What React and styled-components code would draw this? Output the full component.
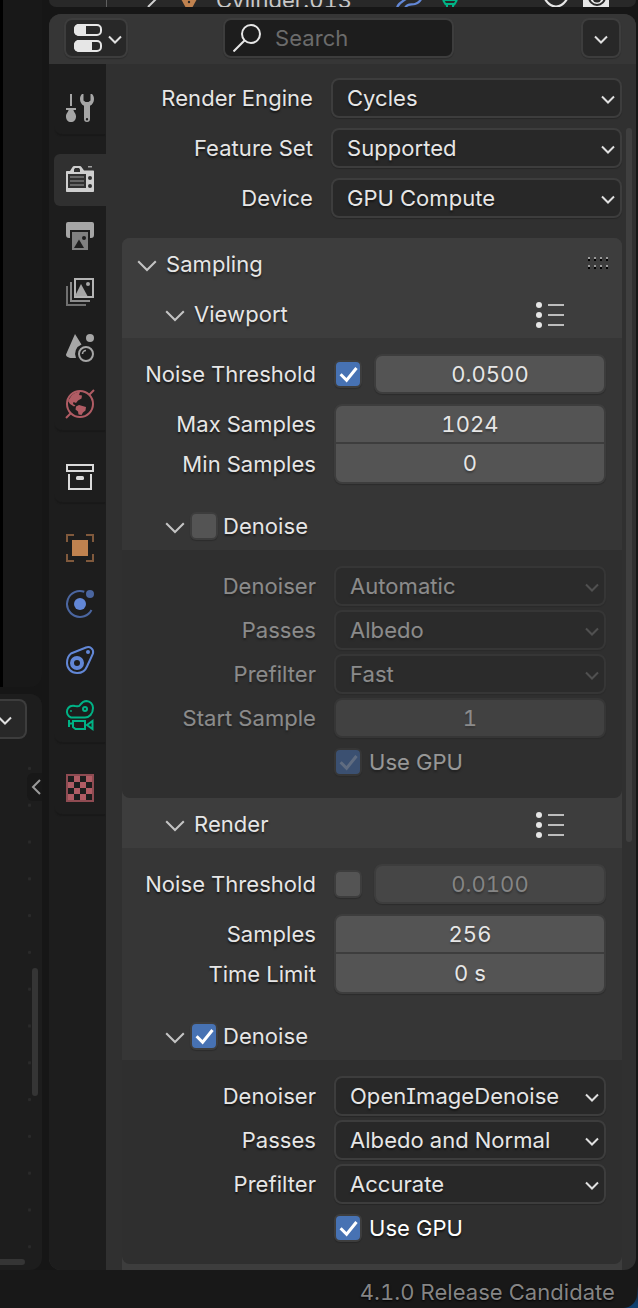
import React from "react";
import styled, { createGlobalStyle, css } from "styled-components";

export default function App() {
  return (
    <>
      <GlobalStyle />
      <Screen>
        <Workspace>
          <LeftColumn>
            <Viewport />
            <NodeEditor />
          </LeftColumn>
          <RightColumn>
            <Outliner />
            <Properties />
          </RightColumn>
        </Workspace>
        <Desktop>
          <StatusBar>4.1.0 Release Candidate</StatusBar>
        </Desktop>
      </Screen>
    </>
  );
}

function NodeEditor() {
  return (
    <NodeEditorStyled>
      <NodeHeader>
        <HeaderStub>
          <Chevron />
        </HeaderStub>
      </NodeHeader>
      <SidebarToggle>
        <svg width="10" height="16" viewBox="0 0 10 16">
          <path d="M9 1 2 8l7 7" fill="none" stroke="#9a9a9a" strokeWidth="2" />
        </svg>
      </SidebarToggle>
      <NodeScrollY />
      <NodeScrollX />
    </NodeEditorStyled>
  );
}

function Outliner() {
  return (
    <OutlinerStyled>
      <OutlinerRow>
        <TreeLine />
        <svg width="10" height="16" viewBox="0 0 10 16">
          <path d="M1 1l7 7-7 7" fill="none" stroke="#d0d0d0" strokeWidth="2" />
        </svg>
        <svg width="18" height="16" viewBox="0 0 18 16">
          <path d="M1 7 6 16h6l5-9z" fill="#c0824f" />
          <circle cx="9" cy="10" r="1.2" fill="#282828" />
        </svg>
        <span>Cylinder.013</span>
        <svg width="28" height="18" viewBox="0 0 28 18">
          <path
            d="M1 17c1-5 5-6 9-9M9 17c2-5 6-3 10-4 4-1 6-4 7-7"
            fill="none"
            stroke="#6287d6"
            strokeWidth="2.2"
          />
        </svg>
        <svg width="16" height="18" viewBox="0 0 16 18">
          <path
            d="M1 9h14M4 14 1 9M12 14l3-5M5 13h6v4H5z"
            fill="none"
            stroke="#00b386"
            strokeWidth="2"
          />
        </svg>
        <RowToggles>
          <svg width="26" height="16" viewBox="0 0 26 16">
            <path
              d="M2 7c6 10 16 10 22 0"
              fill="none"
              stroke="#e6e6e6"
              strokeWidth="2.2"
            />
          </svg>
          <svg width="26" height="16" viewBox="0 0 26 16">
            <path d="M0 0h26v16H0z" fill="#e6e6e6" />
            <circle
              cx="14"
              cy="5"
              r="8"
              fill="none"
              stroke="#282828"
              strokeWidth="2"
            />
            <circle cx="14" cy="6" r="4.5" fill="#282828" />
          </svg>
        </RowToggles>
      </OutlinerRow>
    </OutlinerStyled>
  );
}

function Properties() {
  return (
    <PropertiesStyled>
      <Header>
        <EditorButton>
          <svg width="28" height="28" viewBox="0 0 28 28">
            <rect x="1" y="1" width="26" height="10" rx="4" fill="none" stroke="#e6e6e6" strokeWidth="2" />
            <path d="M12 0H5a5 5 0 0 0-5 5v2a5 5 0 0 0 5 5h7z" fill="#e6e6e6" />
            <rect x="1" y="17" width="26" height="10" rx="4" fill="none" stroke="#e6e6e6" strokeWidth="2" />
            <path d="M18 16H5a5 5 0 0 0-5 5v2a5 5 0 0 0 5 5h13z" fill="#e6e6e6" />
          </svg>
          <Chevron />
        </EditorButton>
        <Search>
          <svg width="28" height="28" viewBox="0 0 28 28">
            <circle cx="18" cy="10" r="9" fill="none" stroke="#e6e6e6" strokeWidth="2" />
            <path d="M11.5 16.5.5 27.5" stroke="#e6e6e6" strokeWidth="2" />
          </svg>
          <span>Search</span>
        </Search>
        <OptionsButton>
          <Chevron />
        </OptionsButton>
      </Header>
      <Body>
        <Tabs>
          {tabGroups.map((group, i) => (
            <TabGroup key={i}>
              {group.map((tab) => (
                <Tab key={tab.name} $active={tab.active} title={tab.name}>
                  <svg width="32" height="32" viewBox="-2 -2 32 32">
                    {tab.icon}
                  </svg>
                </Tab>
              ))}
            </TabGroup>
          ))}
        </Tabs>
        <Content>
          <EngineRows>
            <SelectRow label="Render Engine" value="Cycles" wide />
            <SelectRow label="Feature Set" value="Supported" wide />
            <SelectRow label="Device" value="GPU Compute" wide />
          </EngineRows>
          <Panel>
            <PanelHeader>
              <Disclosure />
              <span>Sampling</span>
              <Grip>
                {Array.from({ length: 8 }, (_, i) => (
                  <i key={i} />
                ))}
              </Grip>
            </PanelHeader>
            <Section
              title="Viewport"
              threshold="0.0500"
              adaptive
              pairs={[
                ["Max Samples", "1024"],
                ["Min Samples", "0"],
              ]}
            >
              <SelectRow label="Denoiser" value="Automatic" />
              <SelectRow label="Passes" value="Albedo" />
              <SelectRow label="Prefilter" value="Fast" />
              <Row>
                <Label>Start Sample</Label>
                <NumberField>1</NumberField>
              </Row>
            </Section>
            <Section
              title="Render"
              threshold="0.0100"
              denoise
              pairs={[
                ["Samples", "256"],
                ["Time Limit", "0 s"],
              ]}
            >
              <SelectRow label="Denoiser" value="OpenImageDenoise" />
              <SelectRow label="Passes" value="Albedo and Normal" />
              <SelectRow label="Prefilter" value="Accurate" />
            </Section>
          </Panel>
        </Content>
        <ScrollThumb />
      </Body>
    </PropertiesStyled>
  );
}

function Section({ title, threshold, adaptive, denoise, pairs, children }) {
  return (
    <>
      <PanelHeader $sub>
        <Disclosure />
        <span>{title}</span>
        <PresetIcon />
      </PanelHeader>
      <SectionBody>
        <Row>
          <Label>Noise Threshold</Label>
          <Check checked={adaptive} />
          <NumberField $dim={!adaptive} $after>
            {threshold}
          </NumberField>
        </Row>
        <PairRow>
          <div>
            {pairs.map(([label]) => (
              <Label key={label}>{label}</Label>
            ))}
          </div>
          <Pair>
            {pairs.map(([label, value]) => (
              <span key={label}>{value}</span>
            ))}
          </Pair>
        </PairRow>
      </SectionBody>
      <PanelHeader $sub $plain>
        <Disclosure />
        <Check checked={denoise} />
        <span>Denoise</span>
      </PanelHeader>
      <SubPanel>
        <SubPanelBody $disabled={!denoise}>
          {children}
          <Row>
            <Label />
            <Check checked />
            <CheckLabel>Use GPU</CheckLabel>
          </Row>
        </SubPanelBody>
      </SubPanel>
    </>
  );
}

function SelectRow({ label, value, wide }) {
  return (
    <Row>
      <Label $wide={wide}>{label}</Label>
      <Select $wide={wide}>
        <span>{value}</span>
        <Chevron />
      </Select>
    </Row>
  );
}

function Check({ checked }) {
  return (
    <CheckBox $on={checked}>
      {checked && (
        <svg width="24" height="24" viewBox="0 0 24 24">
          <path d="M4.6 12.2l6 6L20.5 6" fill="none" stroke="#fff" strokeWidth="3" />
        </svg>
      )}
    </CheckBox>
  );
}

function Chevron() {
  return (
    <ChevronStyled width="14" height="10" viewBox="0 0 14 10">
      <path d="M1 1.5l6 6 6-6" fill="none" stroke="currentColor" strokeWidth="2" />
    </ChevronStyled>
  );
}

function Disclosure() {
  return (
    <svg width="20" height="14" viewBox="0 0 20 14">
      <path d="M1.2 2.2 10 11l8.800-8.800" fill="none" stroke="#c4c4c4" strokeWidth="2" />
    </svg>
  );
}

function PresetIcon() {
  return (
    <PresetStyled width="30" height="28" viewBox="0 0 30 28">
      {[4, 14, 24].map((y) => (
        <g key={y}>
          <circle cx="4" cy={y} r="3" fill="#e6e6e6" />
          <path d={`M13 ${y}h16`} stroke="#bdbdbd" strokeWidth="2" />
        </g>
      ))}
    </PresetStyled>
  );
}

const ToolIcon = (
  <g fill="#a6a6a6">
    <path d="M4 0h2v12H4zM0 14h10v2H7.500c0 2 2.500 3 2.500 6.500 0 3.500-2 5.500-5 5.500s-5-2-5-5.500C0 19 2.500 18 2.500 16H0z" />
    <path
      fillRule="evenodd"
      d="M16 0h1.500v6.500L19.500 8h3l2-1.500V0H26c1.300 1.300 2 3 2 5 0 3.200-1.500 5.500-4 6.800V25a3 3 0 0 1-6 0V11.800C15.500 10.500 14 8.200 14 5c0-2 .7-3.700 2-5zM21 24a1.200 1.200 0 1 0 0 2.400A1.200 1.200 0 0 0 21 24z"
    />
  </g>
);

const RenderIcon = (
  <g>
    <path
      fillRule="evenodd"
      fill="#cfcfcf"
      d="M1 5h3l2.500-4c.4-.7 1-1 1.600-1h5.800c.6 0 1.200.3 1.600 1L18 4.500h9c.6 0 1 .4 1 1V25c0 .6-.4 1-1 1H1c-.6 0-1-.4-1-1V6c0-.6.400-1 1-1zM9 2 8 3.500V6h6V3.500L13 2z"
    />
    <path d="M22 0h4v1.600h-4z" fill="#a0a0a0" />
    <path d="M2 8h18v14H2z" fill="#303030" />
    <path d="M4 11h14M4 15h14M4 19h14" stroke="#666" strokeWidth="2" />
    <circle cx="24" cy="12" r="2" fill="#303030" />
    <circle cx="24" cy="20" r="2" fill="#303030" />
  </g>
);

const OutputIcon = (
  <g>
    <path d="M2 0h24a2 2 0 0 1 2 2v11c0 2-1 3-3 3h-1V8H4v8H3c-2 0-3-1-3-3V2a2 2 0 0 1 2-2z" fill="#a6a6a6" />
    <path d="M6 10h16v18H6z" fill="#808080" />
    <path d="M8 26l5-8.500L18 26z" fill="#1d1d1d" />
    <circle cx="18" cy="16" r="2" fill="#1d1d1d" />
  </g>
);

const LayersIcon = (
  <g>
    <path d="M9 1h18v18H9z" fill="none" stroke="#b4b4b4" strokeWidth="2" />
    <path d="M9 18l6-12 6.500 12z" fill="#a6a6a6" />
    <circle cx="22" cy="6" r="2" fill="#a6a6a6" />
    <path d="M5 4v19h19" fill="none" stroke="#8c8c8c" strokeWidth="2" />
    <path d="M1 8v19h19" fill="none" stroke="#707070" strokeWidth="2" />
  </g>
);

const SceneIcon = (
  <g>
    <path d="M9 0l6.500 10.500A10 10 0 0 0 10 24c-5 .5-10-.5-10-3.500z" fill="#a6a6a6" />
    <circle cx="24" cy="4" r="4" fill="#a6a6a6" />
    <circle cx="20" cy="20" r="7" fill="none" stroke="#a6a6a6" strokeWidth="2" />
    <path d="M16.500 20a3.500 3.500 0 0 1 3.500-3.500" fill="none" stroke="#a6a6a6" strokeWidth="1.600" />
  </g>
);

const WorldIcon = (
  <g>
    <circle cx="14" cy="14" r="13" fill="none" stroke="#b05c64" strokeWidth="2" />
    <path d="M23.500 4.500 28 0M4.500 23.500 0 28" stroke="#b05c64" strokeWidth="2" />
    <path
      d="M4 8c2-4 6-6.500 10-6l-1 3 3 .5-.5 3-3.500 2-2 2.500-2.500-1-.5 2 2.500 1.500-1.500 1L4 14 2 11zM10 16.500l3-1.500 7 2-.5 3.500-2.500 2-1.500 2.500-3-.5-.5-3-2.500-2z"
      fill="#b05c64"
    />
  </g>
);

const CollectionIcon = (
  <g fill="none" stroke="#d9d9d9" strokeWidth="2">
    <path d="M1 3h26v6H1zM3 12v15h22V12" />
    <rect x="10" y="14" width="8" height="4" rx="1.500" fill="#d9d9d9" stroke="none" />
  </g>
);

const ObjectIcon = (
  <g>
    <path d="M6 6h16v16H6z" fill="#c0824f" />
    <path
      d="M1 8V1h7M20 1h7v7M27 20v7h-7M8 27H1v-7"
      fill="none"
      stroke="#80593c"
      strokeWidth="2"
    />
  </g>
);

const PhysicsIcon = (
  <g>
    <circle cx="14" cy="14" r="6" fill="#6287d6" />
    <circle cx="24" cy="4" r="4" fill="#4b66a0" />
    <path d="M18.300 1.700A13 13 0 1 0 25.500 20" fill="none" stroke="#4b66a0" strokeWidth="2" />
  </g>
);

const ConstraintIcon = (
  <g fill="none" stroke="#6287d6">
    <path
      d="M5 7.500 20 1.500C24 0 28 3 27 7.500L21 20.500A10.500 10.500 0 0 1 11 27C5 27 1 22.500 1 17c0-4 1.500-7.500 4-9.500z"
      strokeWidth="2"
    />
    <circle cx="11" cy="17" r="5" strokeWidth="4" />
    <circle cx="22" cy="6" r="2" fill="#6287d6" stroke="none" />
  </g>
);

const DataIcon = (
  <g fill="none" stroke="#00b386" strokeWidth="2">
    <path d="M5 15.500A5.800 5.800 0 1 1 9 4c2 0 3 .7 4.200 0C15 2.500 15.500-1 20.500-1a6.800 6.800 0 0 1 6.500 7c0 6-4 9.500-8 9.500z" />
    <circle cx="19" cy="7" r="2" />
    <circle cx="5" cy="9" r=".9" fill="#00b386" stroke="none" />
    <path d="M7 19h12v8H9.500L7 25zM3 18v7M3 21.500h4M26.500 19v8L21 23z" />
  </g>
);

const TextureIcon = (
  <g>
    <path d="M1 1h26v26H1z" fill="#1d1d1d" stroke="#8f4b52" strokeWidth="2" />
    <path
      d="M8 2h6v6H8zM20 2h6v6h-6zM2 8h6v6H2zM14 8h6v6h-6zM8 14h6v6H8zM20 14h6v6h-6zM2 20h6v6H2zM14 20h6v6h-6z"
      fill="#b05c64"
    />
  </g>
);

const tabGroups = [
  [{ name: "Tool", icon: ToolIcon }],
  [
    { name: "Render", icon: RenderIcon, active: true },
    { name: "Output", icon: OutputIcon },
    { name: "View Layer", icon: LayersIcon },
    { name: "Scene", icon: SceneIcon },
    { name: "World", icon: WorldIcon },
  ],
  [{ name: "Collection", icon: CollectionIcon }],
  [
    { name: "Object", icon: ObjectIcon },
    { name: "Physics", icon: PhysicsIcon },
    { name: "Constraints", icon: ConstraintIcon },
    { name: "Data", icon: DataIcon },
  ],
  [{ name: "Texture", icon: TextureIcon }],
];

const GlobalStyle = createGlobalStyle`
  * {
    box-sizing: border-box;
  }
  body {
    margin: 0;
    background: #161616;
    color: #e6e6e6;
    font-family: Inter, "Liberation Sans", sans-serif;
    font-size: 22px;
    line-height: 28px;
    letter-spacing: 0.05px;
    font-feature-settings: "cv08", "tnum";
    overflow: hidden;
  }
  svg {
    display: block;
    flex-shrink: 0;
  }
`;

const Screen = styled.div`
  display: flex;
  flex-direction: column;
  width: 638px;
  height: 1308px;
`;

const Workspace = styled.div`
  display: flex;
  gap: 7px;
  height: 1270px;
`;

const Desktop = styled.div`
  background: linear-gradient(#161616 40%, #10406f 90%);
`;

const StatusBar = styled.footer`
  width: 637px;
  height: 38px;
  padding: 8px 22px 0 0;
  background: #181818;
  border-bottom-right-radius: 14px;
  color: #858585;
  text-align: right;
  text-shadow: 0 1px 2px #000000;
`;

const LeftColumn = styled.div`
  display: flex;
  flex-direction: column;
  gap: 7px;
  width: 42px;
`;

const Viewport = styled.div`
  height: 687px;
  background: #181818;
  border-left: 3px solid #000;
  border-bottom-right-radius: 12px;
`;

const NodeEditorStyled = styled.div`
  position: relative;
  flex: 1;
  overflow: hidden;
  border-radius: 0 12px 12px 0;
  background: radial-gradient(circle at 29.5px 18.400px, #2a2a2a 1.200px, transparent 1.900px)
    0 56px / 42px 36.800px repeat-y #1d1d1d;
`;

const NodeHeader = styled.div`
  height: 52px;
  padding-top: 5px;
  background: #1d1d1d;
`;

const HeaderStub = styled.div`
  display: flex;
  align-items: center;
  justify-content: flex-end;
  width: 27px;
  height: 40px;
  padding-right: 13px;
  border: 2px solid #3d3d3d;
  border-left: 0;
  border-radius: 0 8px 8px 0;
  background: #282828;
`;

const SidebarToggle = styled.div`
  display: flex;
  align-items: center;
  width: 15px;
  height: 28px;
  margin: 27px 0 0 27px;
  padding-left: 4px;
  border-radius: 6px 0 0 6px;
  background: #181818;
`;

// overlay scroll bars float above the node canvas
const NodeScrollY = styled.div`
  position: absolute;
  right: 4px;
  top: 274px;
  width: 6px;
  height: 128px;
  border-radius: 3px;
  background: #353535;
`;

const NodeScrollX = styled.div`
  position: absolute;
  left: 0;
  bottom: 5px;
  width: 25px;
  height: 6px;
  border-radius: 0 3px 3px 0;
  background: #353535;
`;

const RightColumn = styled.div`
  display: flex;
  flex-direction: column;
  gap: 7px;
  width: 587px;
`;

const OutlinerStyled = styled.div`
  display: flex;
  align-items: flex-end;
  height: 7px;
  flex-shrink: 0;
  overflow: hidden;
  border-radius: 0 0 10px 10px;
  background: #282828;
`;

const OutlinerRow = styled.div`
  display: flex;
  align-items: center;
  width: 100%;
  height: 28px;
  margin-bottom: -7px;
  padding-right: 27px;
  color: #c8c8c8;
  > span {
    width: 136px;
    margin: 0 44px 0 18px;
    white-space: nowrap;
  }
  > svg:nth-child(2) {
    margin: 0 23px 0 40px;
  }
  > svg:nth-of-type(4) {
    margin-left: 18px;
  }
`;

const TreeLine = styled.div`
  width: 1px;
  height: 28px;
  margin-left: 57px;
  background: #606060;
`;

const RowToggles = styled.div`
  display: flex;
  gap: 14px;
  margin-left: auto;
`;

const PropertiesStyled = styled.div`
  display: flex;
  flex-direction: column;
  flex: 1;
  min-height: 0;
  overflow: hidden;
  border-radius: 12px;
  background: #303030;
`;

const Header = styled.div`
  display: flex;
  justify-content: space-between;
  height: 50px;
  flex-shrink: 0;
  padding: 4px 15px;
  background: #363636;
`;

const field = css`
  display: flex;
  align-items: center;
  height: 40px;
  border: 2px solid #3d3d3d;
  border-radius: 8px;
  background: #282828;
  box-shadow: 0 1px 1px rgba(0, 0, 0, 0.2);
`;

const EditorButton = styled.div`
  ${field}
  gap: 6px;
  width: 64px;
  padding-left: 8px;
`;

const Search = styled.div`
  ${field}
  gap: 14px;
  width: 231px;
  margin-left: -32px;
  padding-left: 8px;
  background: #1d1d1d;
  color: #6b6b6b;
`;

const OptionsButton = styled.div`
  ${field}
  justify-content: center;
  width: 40px;
`;

const ChevronStyled = styled.svg`
  color: #e0e0e0;
  position: relative;
  top: 2px;
`;

const Body = styled.div`
  display: flex;
  flex: 1;
  min-height: 0;
`;

const Tabs = styled.div`
  display: flex;
  flex-direction: column;
  gap: 20px;
  width: 57px;
  padding: 18px 0 0 5px;
  background: #1d1d1d;
`;

const TabGroup = styled.div`
  display: flex;
  flex-direction: column;
  gap: 4px;
  border-radius: 8px 0 0 8px;
  box-shadow: 0 3px 1px -1px #191919;
`;

const Tab = styled.div`
  display: flex;
  align-items: center;
  height: 52px;
  padding-left: 10px;
  border-radius: 6px 0 0 6px;
  background: ${({ $active }) => ($active ? "#303030" : "transparent")};
`;

const Content = styled.div`
  width: 516px;
  padding: 14px 0 0 16px;
`;

const EngineRows = styled.div`
  display: flex;
  flex-direction: column;
  gap: 10px;
  margin-bottom: 20px;
`;

const Row = styled.div`
  display: flex;
  align-items: center;
  height: 40px;
`;

const Label = styled.div`
  width: ${({ $wide }) => ($wide ? 191 : 194)}px;
  height: 40px;
  margin-right: 18px;
  line-height: 40px;
  text-align: right;
  white-space: nowrap;
  text-shadow: 0 2px 2px rgba(0, 0, 0, 0.6);
`;

const Select = styled.div`
  ${field}
  justify-content: space-between;
  width: ${({ $wide }) => ($wide ? 291 : 272)}px;
  padding: 0 5px 0 14px;
  text-shadow: 0 2px 2px rgba(0, 0, 0, 0.5);
`;

const NumberField = styled.div`
  ${field}
  justify-content: center;
  width: ${({ $after }) => ($after ? 232 : 272)}px;
  margin-left: ${({ $after }) => ($after ? 12 : 0)}px;
  background: ${({ $dim }) => ($dim ? "#464646" : "#545454")};
  color: ${({ $dim }) => ($dim ? "#858585" : "#e6e6e6")};
  text-shadow: 0 2px 2px rgba(0, 0, 0, 0.3);
`;

const PairRow = styled.div`
  display: flex;
  margin-top: 10px;
`;

const Pair = styled.div`
  display: flex;
  flex-direction: column;
  width: 272px;
  height: 80px;
  border: 2px solid #3d3d3d;
  border-radius: 8px;
  background: #545454;
  box-shadow: 0 1px 1px rgba(0, 0, 0, 0.2);
  text-align: center;
  text-shadow: 0 2px 2px rgba(0, 0, 0, 0.3);
  span {
    height: 38px;
    line-height: 38px;
  }
  span:first-child {
    line-height: 36px;
    border-bottom: 2px solid #3d3d3d;
  }
`;

const CheckBox = styled.div`
  width: 28px;
  height: 28px;
  flex-shrink: 0;
  border: 2px solid #3d3d3d;
  border-radius: 6px;
  background: ${({ $on }) => ($on ? "#4772b3" : "#545454")};
  box-shadow: 0 1px 1px rgba(0, 0, 0, 0.2);
`;

const CheckLabel = styled.span`
  margin-left: 7px;
  color: #fff;
  text-shadow: 0 2px 2px rgba(0, 0, 0, 0.6);
`;

const Panel = styled.div`
  overflow: hidden;
  height: 1032px;
  border-radius: 8px 8px 0 0;
  background: #3d3d3d;
  text-shadow: 0 2px 2px rgba(0, 0, 0, 0.5);
`;

const PanelHeader = styled.div`
  display: flex;
  align-items: center;
  height: 50px;
  padding: 2px 12px 0 ${({ $sub }) => ($sub ? 43 : 15)}px;
  background: ${({ $plain }) => ($plain ? "#363636" : "#3d3d3d")};
  > svg:first-child {
    position: relative;
    top: 2px;
  }
  > span {
    margin-left: ${({ $plain }) => ($plain ? 5 : 9)}px;
  }
  > ${CheckBox} {
    margin-left: 5px;
  }
`;

const PresetStyled = styled.svg`
  margin: 2px 45px 0 auto;
`;

const Grip = styled.div`
  display: grid;
  grid-template-columns: repeat(4, 2px);
  gap: 4px;
  margin: 0 2px 3px auto;
  i {
    width: 2px;
    height: 4px;
    background: linear-gradient(#9a9a9a 50%, #000 50%);
  }
`;

const SectionBody = styled.div`
  height: 162px;
  padding: 16px 0;
  background: #363636;
`;

const SubPanel = styled.div`
  background: #3d3d3d;
`;

const SubPanelBody = styled.div`
  display: flex;
  flex-direction: column;
  gap: 4px;
  padding: 16px 0;
  border-radius: 0 0 8px 8px;
  background: #2f2f2f;
  ${Row} {
    opacity: ${({ $disabled }) => ($disabled ? 0.5 : 1)};
  }
  ${ChevronStyled}, ${CheckBox} svg {
    opacity: ${({ $disabled }) => ($disabled ? 0.4 : 1)};
  }
`;

const ScrollThumb = styled.div`
  width: 6px;
  height: 714px;
  margin: 64px 0 0 4px;
  border-radius: 3px;
  background: #3f3f3f;
`;
